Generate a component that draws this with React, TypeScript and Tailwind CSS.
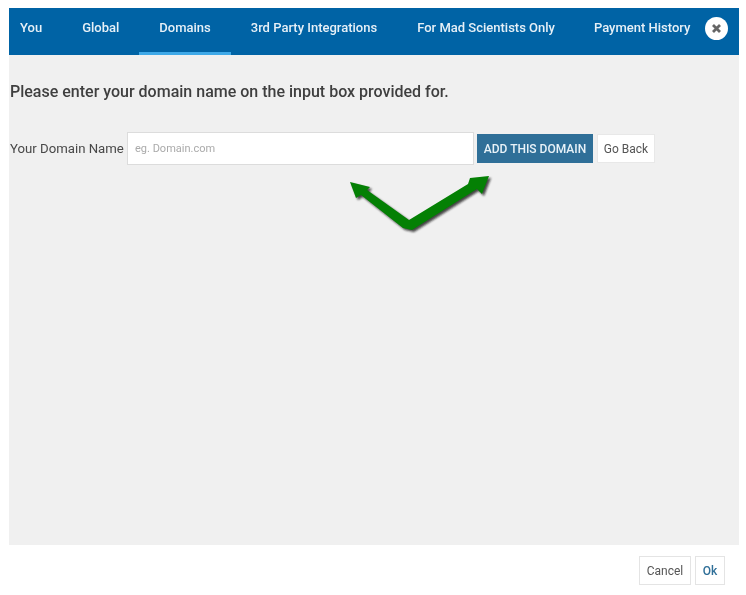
import React from 'react';

const tabs = ['Global', 'Domains', '3rd Party Integrations', 'For Mad Scientists Only', 'Payment History'];

const arrowPoints = '10,12 30,17 27,20 69,50 128,14 130,8 149,6 142,24 137,19 72,60 63,58 21,25 16,28';

function Arrows() {
  return (
    <svg className="absolute left-[340px] top-[170px]" width="160" height="70" viewBox="0 0 160 70" fill="none">
      <defs>
        <filter id="soft" x="-10%" y="-10%" width="120%" height="120%">
          <feGaussianBlur stdDeviation="1" />
        </filter>
      </defs>
      <polygon points={arrowPoints} fill="#1a1a1a" fillOpacity="0.8" transform="translate(2 2)" filter="url(#soft)" />
      <polygon points={arrowPoints} fill="#048004" />
    </svg>
  );
}

export default function App() {
  return (
    <div className="relative w-[746px] h-[595px] bg-white pt-2 pl-[9px] pr-[7px] font-['Roboto',sans-serif] overflow-hidden blur-[0.4px]">
      {/* Tabs */}
      <div className="flex items-stretch h-[47px] bg-[#0063a5] pl-[11px]">
        <div className="flex items-center pr-5 pb-2 text-[13px] font-medium text-[#e6f0f7]">You</div>
        {tabs.map((t) => (
          <div
            key={t}
            className={
              t === 'Domains'
                ? 'flex items-center px-5 pb-[5px] text-[13px] font-medium text-[#e6f0f7] border-b-[3px] border-[#3fa9e8]'
                : t === 'Payment History'
                  ? 'flex items-center pl-[19px] pr-5 pb-2 text-[13px] font-medium text-[#e6f0f7]'
                  : 'flex items-center px-5 pb-2 text-[13px] font-medium text-[#e6f0f7]'
            }
          >
            {t}
          </div>
        ))}
        <div className="flex items-center -ml-[5px] pb-[7px]">
          <div className="flex items-center justify-center w-[23px] h-[23px] rounded-full bg-white">
            <svg width="11" height="11" viewBox="0 0 11 11">
              <path d="M2 2 L9 9 M9 2 L2 9" stroke="#666" strokeWidth="2.8" />
            </svg>
          </div>
        </div>
      </div>

      {/* Body */}
      <div className="h-[490px] bg-[#f0f0f0] pt-[27px] pl-[1px]">
        <h1 className="text-[16px] leading-[19px] font-medium text-[#3f3f3f]">
          Please enter your domain name on the input box provided for.
        </h1>
        <div className="flex items-center mt-[31px] h-[33px]">
          <label className="text-[13.2px] text-[#484848] w-[117px]">Your Domain Name</label>
          <div className="flex items-center w-[347px] h-[33px] bg-white border border-[#dcdcdc] pl-[7px] pt-[2px] text-[11px] text-[#aaa]">
            eg. Domain.com
          </div>
          <button className="ml-[3px] h-[29px] w-[116px] bg-[#2f6f98] text-[12px] font-medium text-[#e8f2f8]">
            ADD THIS DOMAIN
          </button>
          <button className="ml-[4px] h-[29px] w-[58px] bg-white border border-[#e8e8e8] text-[12px] text-[#555]">
            Go Back
          </button>
        </div>
      </div>

      {/* Footer */}
      <div className="flex justify-end gap-[4px] pt-[11px] pr-[14px]">
        <button className="h-[29px] w-[52px] bg-white border border-[#e4e4e4] text-[12px] text-[#555]">Cancel</button>
        <button className="h-[29px] w-[30px] bg-white border border-[#e4e4e4] text-[12px] font-medium text-[#2f6f98]">Ok</button>
      </div>

      <Arrows />
    </div>
  );
}
